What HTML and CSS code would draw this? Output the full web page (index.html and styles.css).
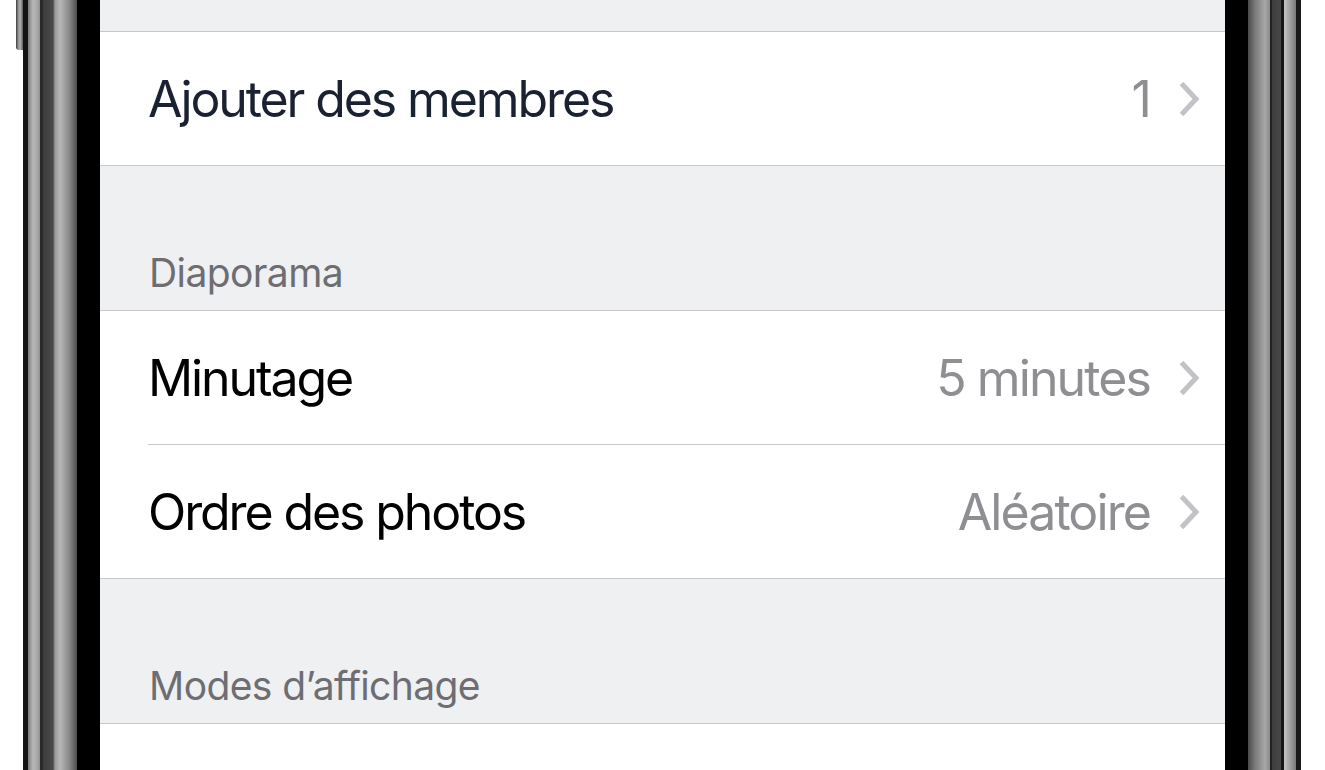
FILE: index.html
```html
<!DOCTYPE html>
<html lang="fr">
<head>
<meta charset="utf-8">
<title>Réglages</title>
<link rel="stylesheet" href="styles.css">
</head>
<body>
<div class="device">
  <div class="side side-left">
    <div class="hw-slot"><div class="hw-button"></div></div>
    <div class="rim rim-left"></div>
  </div>
  <main class="screen">
    <div class="gap gap-top"></div>
    <section class="group">
      <div class="row">
        <span class="label label-dark">Ajouter des membres</span>
        <span class="value">1</span>
        <svg class="chev" viewBox="0 0 22 38" width="22" height="38"><polyline points="3.5,3.5 18,19 3.5,34.5"/></svg>
      </div>
    </section>
    <div class="header"><span>Diaporama</span></div>
    <section class="group">
      <div class="row row-inset">
        <span class="label">Minutage</span>
        <span class="value">5 minutes</span>
        <svg class="chev" viewBox="0 0 22 38" width="22" height="38"><polyline points="3.5,3.5 18,19 3.5,34.5"/></svg>
      </div>
      <div class="row">
        <span class="label">Ordre des photos</span>
        <span class="value">Aléatoire</span>
        <svg class="chev" viewBox="0 0 22 38" width="22" height="38"><polyline points="3.5,3.5 18,19 3.5,34.5"/></svg>
      </div>
    </section>
    <div class="header"><span>Modes d’affichage</span></div>
    <section class="group group-last"></section>
  </main>
  <div class="side side-right">
    <div class="rim rim-right"></div>
  </div>
</div>
</body>
</html>
```

FILE: styles.css
```css
html, body {
  margin: 0;
  padding: 0;
  background: #ffffff;
  height: 770px;
  overflow: hidden;
}

.device {
  display: flex;
  height: 770px;
}

.side {
  display: flex;
  width: 100px;
  flex: none;
}

.hw-slot {
  width: 23px;
  flex: none;
}

.hw-button {
  margin-left: 16px;
  width: 7px;
  height: 50px;
  border-radius: 0 0 0 3px;
  background: linear-gradient(90deg, #3a3a3a 0, #8c8c8c 30%, #b4b4b4 60%, #5a5a5a 100%);
}

.rim {
  flex: 1;
}

.rim-left {
  background: linear-gradient(90deg,
    #141414 0, #141414 5px,
    #7a7a7a 5px, #b8b8b8 10px, #a4a4a4 15px, #8e8e8e 17px,
    #2a2a2a 17px, #2a2a2a 20px,
    #3c3c3c 20px, #4a4a4a 30px,
    #9a9a9a 32px, #b8b8b8 37px, #8a8a8a 46px, #4e4e4e 54px,
    #000 54px, #000 77px);
}

.rim-right {
  width: 76px;
  flex: none;
  background: linear-gradient(90deg,
    #000 0, #000 23px,
    #4a4a4a 23px, #7a7a7a 30px, #a8a8a8 40px, #8a8a8a 45px,
    #222 45px, #222 47px,
    #3e3e3e 47px, #474747 56px,
    #161616 56px, #161616 59px,
    #c4c4c4 59px, #9a9a9a 66px, #777 71px,
    #181818 71px, #181818 76px);
}

.screen {
  width: 1125px;
  flex: none;
  background: #eff0f2;
  display: flex;
  flex-direction: column;
  font-family: "Inter", "Roboto", "Liberation Sans", sans-serif;
}

.gap-top {
  height: 31px;
  border-bottom: 1px solid #c8c8cc;
}

.group {
  background: #ffffff;
  border-bottom: 1px solid #c8c8cc;
}

.group-last {
  flex: 1;
  border-bottom: none;
}

.row {
  height: 133px;
  display: flex;
  align-items: center;
  padding: 0 25px 0 48px;
  position: relative;
}

.row-inset {
  border-bottom: 1px solid transparent;
}

.row-inset::after {
  content: "";
  position: absolute;
  left: 48px;
  right: 0;
  bottom: -1px;
  height: 1px;
  background: #c8c8cc;
}

.label {
  flex: 1;
  font-size: 50px;
  letter-spacing: -2.1px;
  color: #000;
}

.label-dark {
  color: #1a2130;
}

.value {
  font-size: 50px;
  letter-spacing: -1.9px;
  color: #8e8e93;
  margin-right: 28px;
}

.chev {
  flex: none;
  fill: none;
  stroke: #c2c3c7;
  stroke-width: 5;
  stroke-linecap: butt;
}

.header {
  height: 145px;
  border-bottom: 1px solid #c8c8cc;
  display: flex;
  align-items: flex-end;
  padding: 0 48px 14px 49px;
  box-sizing: border-box;
  font-size: 39px;
  letter-spacing: -0.6px;
  color: #6d6d72;
}
```
